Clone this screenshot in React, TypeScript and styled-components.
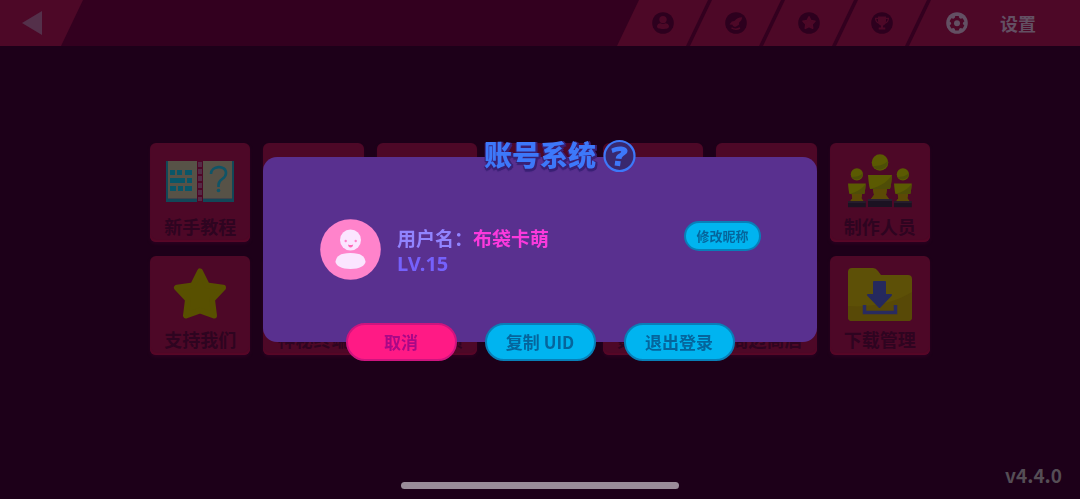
import React from "react";
import styled, { createGlobalStyle, css } from "styled-components";

const GlobalStyle = createGlobalStyle`
  * { box-sizing: border-box; }
  body {
    margin: 0;
    background: #1d0019;
    font-family: "Noto Sans CJK SC", "Noto Sans", sans-serif;
    font-weight: 700;
  }
  button { font: inherit; border: 0; padding: 0; cursor: pointer; }
  svg { display: block; }
`;

const Page = styled.div`
  min-height: 100vh;
  display: flex;
  flex-direction: column;
`;

const Header = styled.header`
  height: 46px;
  display: flex;
  justify-content: space-between;
  background: #33001f;
`;

const BackButton = styled.button`
  width: 83px;
  padding-left: 22px;
  background: #4d0827;
  clip-path: polygon(0 0, 100% 0, calc(100% - 22px) 100%, 0 100%);
`;

const Tabs = styled.nav`
  display: flex;
`;

const Tab = styled.button<{ $active?: boolean }>`
  width: 91px;
  margin-right: -18px;
  display: flex;
  align-items: center;
  justify-content: center;
  background: #4d0827;
  color: #635063;
  clip-path: polygon(22px 0, 100% 0, calc(100% - 22px) 100%, 0 100%);
  ${(p) =>
    p.$active &&
    css`
      width: 171px;
      margin-right: 0;
      padding-left: 36px;
      justify-content: flex-start;
      gap: 31px;
      font-size: 18px;
      line-height: 24px;
      clip-path: polygon(22px 0, 100% 0, 100% 100%, 0 100%);
    `}
`;

const Main = styled.main`
  flex: 1;
  display: flex;
  align-items: center;
  justify-content: center;
`;

const MenuGrid = styled.div`
  width: 780px;
  max-width: 94%;
  display: grid;
  grid-template-columns: repeat(7, 1fr);
  gap: 14px 13px;
`;

const Card = styled.button`
  height: 99px;
  display: flex;
  flex-direction: column;
  align-items: center;
  justify-content: space-between;
  padding: 10px 0 3px;
  border-radius: 6px;
  background: #4d0827;
  box-shadow: inset 0 -2px 1px #570727, 0 2px 3px #2b0020;
  color: #2e0420;
  font-size: 18px;
  line-height: 26px;
  white-space: nowrap;
`;

const Footer = styled.footer`
  height: 48px;
  display: grid;
  grid-template-columns: 1fr 278px 1fr;
  align-items: center;
`;

const HomeBar = styled.div`
  grid-column: 2;
  align-self: end;
  height: 7px;
  margin-bottom: 10px;
  border-radius: 4px;
  background: #9a8c99;
`;

const Version = styled.span`
  justify-self: end;
  margin-right: 18px;
  color: #554d55;
  font-size: 19px;
  line-height: 24px;
`;

const Overlay = styled.div`
  position: fixed;
  inset: 0;
  display: flex;
  align-items: center;
  justify-content: center;
`;

const Dialog = styled.section`
  width: 554px;
  max-width: 94%;
  height: 185px;
  display: flex;
  flex-direction: column;
  justify-content: space-between;
  border-radius: 14px;
  background: #59308f;
`;

const TitleRow = styled.div`
  display: flex;
  align-items: center;
  justify-content: center;
  gap: 7px;
  height: 36px;
  margin-top: -19px;
  padding-left: 40px;
`;

const Title = styled.h1`
  margin: 0;
  padding-bottom: 4px;
  color: #3d78fa;
  font-size: 28px;
  font-weight: 900;
  line-height: 32px;
  text-shadow: 2px 0 0 #3a2074, -1px 1px 0 #3a2074, 2px 2px 0 #3a2074, 0 3px 1px #3a2074;
`;

const HelpButton = styled.button`
  background: none;
`;

const Profile = styled.div`
  display: flex;
  align-items: flex-start;
  gap: 16px;
  padding: 2px 56px 0 57px;
`;

const Info = styled.dl`
  flex: 1;
  margin: 0;
  padding-top: 6px;
  font-size: 19px;
  line-height: 26px;
`;

const NameRow = styled.div`
  display: flex;
  color: #9184ff;
`;

const UserName = styled.dd`
  margin: 0;
  color: #fb39dc;
`;

const Level = styled.dd`
  margin: 0;
  color: #7561fb;
  font-family: "Noto Sans", sans-serif;
  font-size: 20px;
`;

const Pill = styled.button<{ $tone?: "pink"; $small?: boolean }>`
  width: ${(p) => (p.$small ? 77 : 111)}px;
  height: ${(p) => (p.$small ? 30 : 38)}px;
  margin-top: ${(p) => (p.$small ? 2 : 0)}px;
  border: 2px solid ${(p) => (p.$tone === "pink" ? "#cf147f" : "#087fb8")};
  border-radius: 19px;
  background: ${(p) => (p.$tone === "pink" ? "#ff1a85" : "#00b4f0")};
  color: ${(p) => (p.$tone === "pink" ? "#a90887" : "#05659c")};
  font-size: ${(p) => (p.$small ? 13 : 17)}px;
  line-height: 24px;
  white-space: nowrap;
`;

const Actions = styled.div`
  display: flex;
  justify-content: center;
  gap: 28px;
  margin-bottom: -19px;
`;

const DARK = "#2d001e";
const WINE = "#4d0827";
const STAR =
  "M12 5.8l1.9 3.7 4.1.7-2.9 3 .6 4.1-3.7-1.8-3.7 1.8.6-4.1-2.9-3 4.1-.7z";

const TabIcon = ({ children, fill = DARK }: { children: React.ReactNode; fill?: string }) => (
  <svg width="24" height="24" viewBox="0 0 24 24" aria-hidden="true">
    <circle cx="12" cy="12" r="10.8" fill={fill} />
    {children}
  </svg>
);

const PersonIcon = () => (
  <TabIcon>
    <circle cx="12" cy="8.6" r="3.7" fill={WINE} />
    <path d="M6 15.600c0-2.200 2-3.300 3.700-3.300 1 .8 3.600.8 4.600 0 1.700 0 3.700 1.100 3.700 3.300 0 1.800-2.600 2.500-6 2.500s-6-.7-6-2.500z" fill={WINE} />
  </TabIcon>
);

const RocketIcon = () => (
  <TabIcon>
    <path d="M18.200 6.300c-3.600.2-6 1.500-7.800 3.700l-2.600.5-2.300 3 3 .2c.3 1.500 1.700 2.300 3.300 2.100l3.400-2.300-.3-1.800c1.900-1.300 3-2.900 3.300-5.400z" fill={WINE} />
    <path d="M7.500 16.800q4 2.600 8.500.2" stroke={WINE} strokeWidth="1.500" fill="none" />
  </TabIcon>
);

const StarIcon = () => (
  <TabIcon>
    <path d={STAR} fill={WINE} stroke={WINE} strokeWidth="1.600" strokeLinejoin="round" />
  </TabIcon>
);

const TrophyIcon = () => (
  <TabIcon>
    <path d="M8 5.600h8v4.600c0 2.200-1.200 3.700-2.900 4.200v2.200h2.200v1.800H8.700v-1.800h2.200v-2.200C9.200 13.900 8 12.400 8 10.200z" fill={WINE} />
    <path d="M8.500 7.300H5.600c0 2.500 1 4.200 3.400 4.800M15.500 7.300h2.900c0 2.500-1 4.200-3.400 4.800" stroke={WINE} strokeWidth="1.300" fill="none" />
  </TabIcon>
);

const GearIcon = () => (
  <TabIcon fill="#635063">
    <path
      d="M10.300 5h3.400l.6 2 1.300.8 2.100-.5 1.700 3-1.500 1.500v1.200l1.400 1.500-1.700 2.900-2.100-.5-1.200.8-.6 1.800h-3.400l-.6-1.800-1.200-.8-2.100.5-1.700-2.900 1.400-1.500v-1.200l-1.500-1.500 1.700-3 2.100.5 1.300-.8z"
      fill="#4d0827"
    />
    <circle cx="12" cy="12.200" r="3" fill="#635063" />
  </TabIcon>
);

const BookArt = () => (
  <svg width="70" height="54" viewBox="0 0 70 54" aria-hidden="true">
    <path d="M1 8h68v41H1z" fill="#124758" />
    <path d="M3 8h29v37H3zM38 8h29v37H38z" fill="#575247" />
    <path d="M3 45h64v1H3z" fill="#41434b" />
    <path d="M32 8h6v41h-6z" fill="#4d0827" />
    <path d="M35 9v39" stroke="#542b46" strokeWidth="4" strokeDasharray="5 2" />
    <path d="M5 17h5v5H5zM12 17h5v5h-5zM20 17h7v5h-7zM5 25h15v5H5zM22 25h5v5h-5zM5 33h6v5H5zM13 33h5v5h-5zM20 33h7v5h-7z" fill="#0a5668" />
    <path d="M46 21c0-8.500 15-9.500 15-1 0 7-7.500 5-7.500 12v2" stroke="#105467" strokeWidth="2.600" fill="none" />
    <circle cx="53.500" cy="37.500" r="1.800" fill="#105467" />
  </svg>
);

const StarArt = () => (
  <svg width="56" height="56" viewBox="0 0 56 56" aria-hidden="true">
    <path
      d="M28 5.500l7 14 16 2.300L40 33.500l2 16L28 44.500l-14 5 2-16L5 21.800l16-2.300z"
      fill="#585000" stroke="#585000" strokeWidth="6" strokeLinejoin="round"
    />
  </svg>
);

const Statue = () => (
  <>
    <circle cx="12" cy="8.500" r="8.300" fill="#5b5a02" />
    <path d="M5 12a8.300 8.300 0 0 0 15-5c-4 4-9 5-15 5z" fill="#4d4f07" />
    <path d="M0 21h24c-.5 6-1 11-2 14h-3l-1 6 3 4H3l3-4-1-6H2c-1-3-1.500-8-2-14z" fill="#5b5a02" />
    <path d="M24 21c-.5 6-1 11-2 14H2c12-3 18-8 22-14z" fill="#4f4d07" />
    <path d="M5 35h14l-1 6 3 4H3l3-4z" fill="#5c4a05" />
    <path d="M0 45h24v8H0z" fill="#1b1222" />
    <path d="M0 45h24v2H0z" fill="#292030" />
  </>
);

const StatuesArt = () => (
  <svg width="66" height="56" viewBox="0 0 66 56" aria-hidden="true">
    <g transform="translate(1 15) scale(.74)"><Statue /></g>
    <g transform="translate(47 15) scale(.74)"><Statue /></g>
    <g transform="translate(21 1)"><Statue /></g>
  </svg>
);

const FolderArt = () => (
  <svg width="66" height="56" viewBox="0 0 66 56" aria-hidden="true">
    <path d="M1 6q0-4 4-4h21q3 0 5 3l3 4h27q4 0 4 4v38q0 4-4 4H5q-4 0-4-4z" fill="#5d5007" />
    <path d="M1 40C25 42 49 36 65 26v25q0 4-4 4H5q-4 0-4-4z" fill="#584907" />
    <path d="M27 16h11v13h6L32.500 41 21 29h6z" fill="#25295e" stroke="#25295e" strokeWidth="2" strokeLinejoin="round" />
    <path d="M17.500 39v7.500h31V39" stroke="#292b60" strokeWidth="3.500" fill="none" />
  </svg>
);

const Avatar = () => (
  <svg width="61" height="61" viewBox="0 0 61 61" role="img" aria-label="头像">
    <circle cx="30.500" cy="30.500" r="30.300" fill="#ff83cb" />
    <circle cx="30.500" cy="21" r="10.500" fill="#fbe5ff" />
    <circle cx="25.700" cy="22" r="1.200" fill="#ff83cb" />
    <circle cx="35.700" cy="22" r="1.200" fill="#ff83cb" />
    <path d="M28 25.500q2.600 1 5.200 0-.4 3-2.600 3t-2.600-3z" fill="#ff6ab8" />
    <path d="M15.500 42.500c1-5 4-8.500 15-8.500s14 3.500 15 8.500c0 4-6 7.500-15 7.500s-15-3.500-15-7.500z" fill="#fbe5ff" />
  </svg>
);

const HelpIcon = () => (
  <svg width="33" height="34" viewBox="0 0 33 34" aria-hidden="true">
    <circle cx="16.500" cy="17" r="15" fill="#39286f" stroke="#3d78fa" strokeWidth="2.200" />
    <path d="M8.300 9.800c3.500-2.800 15.500-4 16.200 1.700.4 4.400-5.700 4.600-6 8.500l-5.800-.6c.3-4.600 5.500-5 5.500-6.700 0-1.500-4.500-.8-8.700 1.300zM12.200 21.800l5.600.5-.8 4.900-5.400-.7z" fill="#3d78fa" />
  </svg>
);

const cards: { label?: string; art?: React.ReactNode }[] = [
  { label: "新手教程", art: <BookArt /> },
  {},
  {},
  {},
  {},
  {},
  { label: "制作人员", art: <StatuesArt /> },
  { label: "支持我们", art: <StarArt /> },
  { label: "神秘终端" },
  { label: "意见反馈" },
  {},
  { label: "数据恢复" },
  { label: "周边商店" },
  { label: "下载管理", art: <FolderArt /> },
];

export default function App() {
  return (
    <Page>
      <GlobalStyle />
      <Header>
        <BackButton aria-label="返回">
          <svg width="22" height="24" viewBox="0 0 22 24" aria-hidden="true">
            <path d="M0 12L20 0v24z" fill="#54304a" />
          </svg>
        </BackButton>
        <Tabs>
          <Tab aria-label="角色"><PersonIcon /></Tab>
          <Tab aria-label="探索"><RocketIcon /></Tab>
          <Tab aria-label="收藏"><StarIcon /></Tab>
          <Tab aria-label="成就"><TrophyIcon /></Tab>
          <Tab $active><GearIcon />设置</Tab>
        </Tabs>
      </Header>
      <Main>
        <MenuGrid>
          {cards.map((card, index) => (
            <Card key={index}>
              {card.art ?? <span />}
              {card.label && <span>{card.label}</span>}
            </Card>
          ))}
        </MenuGrid>
      </Main>
      <Footer>
        <HomeBar />
        <Version>v4.4.0</Version>
      </Footer>
      <Overlay>
        <Dialog role="dialog" aria-labelledby="account-title">
          <TitleRow>
            <Title id="account-title">账号系统</Title>
            <HelpButton aria-label="帮助"><HelpIcon /></HelpButton>
          </TitleRow>
          <Profile>
            <Avatar />
            <Info>
              <NameRow>
                <dt>用户名：</dt>
                <UserName>布袋卡萌</UserName>
              </NameRow>
              <Level>LV.15</Level>
            </Info>
            <Pill $small>修改昵称</Pill>
          </Profile>
          <Actions>
            <Pill $tone="pink">取消</Pill>
            <Pill>复制 UID</Pill>
            <Pill>退出登录</Pill>
          </Actions>
        </Dialog>
      </Overlay>
    </Page>
  );
}
